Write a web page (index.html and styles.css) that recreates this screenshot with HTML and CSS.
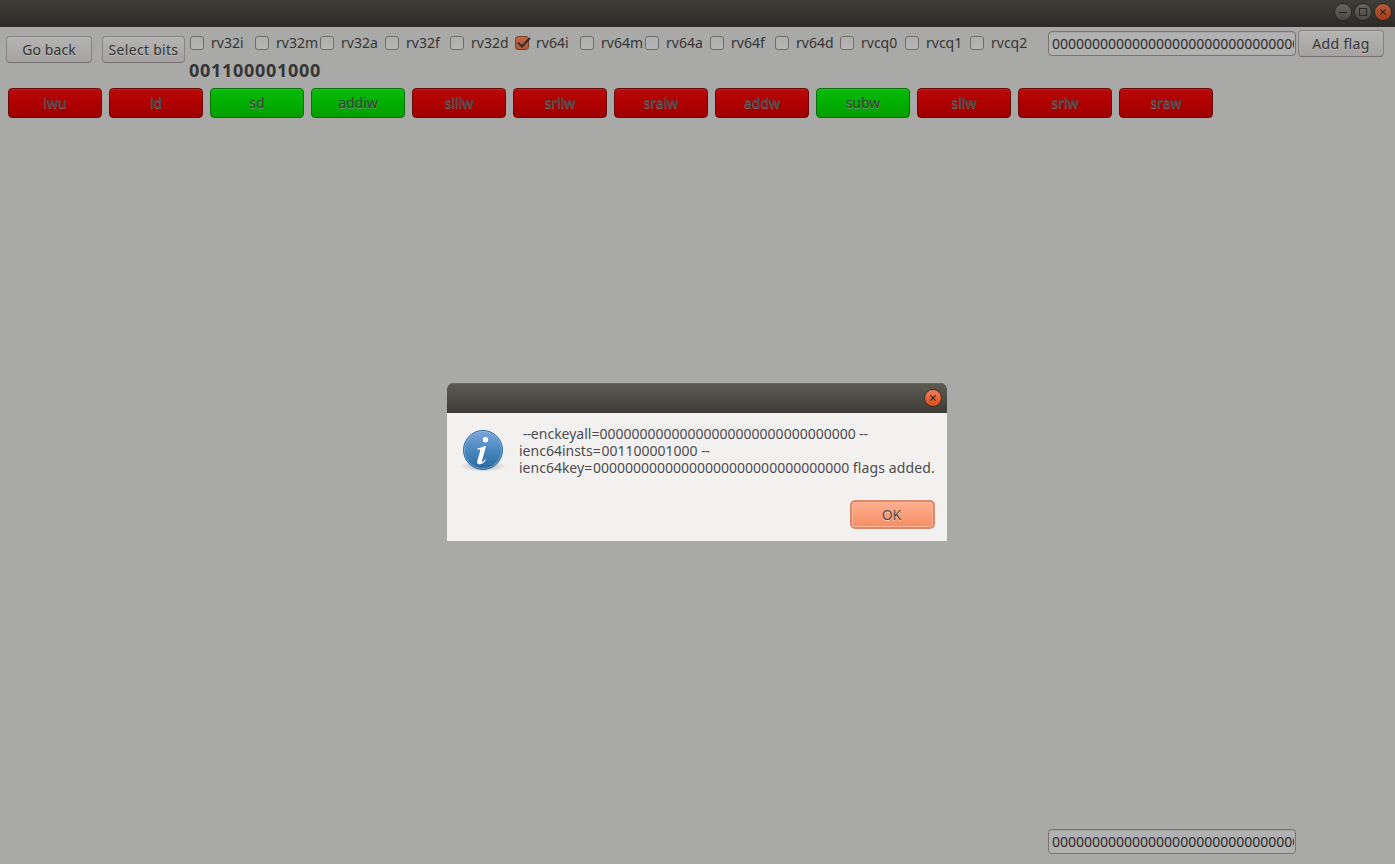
FILE: index.html
```
<!DOCTYPE html>
<html lang="en">
<head>
<meta charset="utf-8">
<title>Instruction flags</title>
<link rel="stylesheet" href="styles.css">
</head>
<body>
<div class="window">
  <header class="titlebar">
    <span class="wbtn"><svg viewBox="0 0 18 18"><path d="M5 9.500h8"/></svg></span>
    <span class="wbtn"><svg viewBox="0 0 18 18"><path d="M5.500 5.500h7v7h-7z"/></svg></span>
    <span class="wbtn close"><svg viewBox="0 0 18 18"><path d="M6.300 6.300l5.400 5.400M11.700 6.300l-5.400 5.400"/></svg></span>
  </header>
  <main class="content">
    <section class="toolbar">
      <button class="btn back">Go back</button>
      <button class="btn select">Select bits</button>
      <div class="choices">
        <div class="checks">
          <label class="check"><i class="box"></i>rv32i</label>
          <label class="check"><i class="box"></i>rv32m</label>
          <label class="check"><i class="box"></i>rv32a</label>
          <label class="check"><i class="box"></i>rv32f</label>
          <label class="check"><i class="box"></i>rv32d</label>
          <label class="check"><i class="box checked"><svg viewBox="0 0 16 16"><path d="M3 7.500l4 4 8-8.500"/></svg></i>rv64i</label>
          <label class="check"><i class="box"></i>rv64m</label>
          <label class="check"><i class="box"></i>rv64a</label>
          <label class="check"><i class="box"></i>rv64f</label>
          <label class="check"><i class="box"></i>rv64d</label>
          <label class="check"><i class="box"></i>rvcq0</label>
          <label class="check"><i class="box"></i>rvcq1</label>
          <label class="check"><i class="box"></i>rvcq2</label>
        </div>
        <div class="bits">001100001000</div>
      </div>
      <div class="entry"><div class="entry-text">00000000000000000000000000000000</div></div>
      <button class="btn add">Add flag</button>
    </section>
    <section class="insts">
      <button class="inst">lwu</button>
      <button class="inst">ld</button>
      <button class="inst on">sd</button>
      <button class="inst on">addiw</button>
      <button class="inst">slliw</button>
      <button class="inst">srliw</button>
      <button class="inst">sraiw</button>
      <button class="inst">addw</button>
      <button class="inst on">subw</button>
      <button class="inst">sllw</button>
      <button class="inst">srlw</button>
      <button class="inst">sraw</button>
    </section>
    <footer class="bottom">
      <div class="entry"><div class="entry-text">00000000000000000000000000000000</div></div>
    </footer>
  </main>
  <div class="dialog">
    <div class="dialog-title">
      <span class="wbtn close"><svg viewBox="0 0 18 18"><path d="M6.300 6.300l5.400 5.400M11.700 6.300l-5.400 5.400"/></svg></span>
    </div>
    <div class="dialog-body">
      <svg class="info" viewBox="0 0 48 48">
        <defs>
          <linearGradient id="blue" x1="0" y1="0" x2="0" y2="1"><stop offset="0" stop-color="#7da5dc"/><stop offset=".55" stop-color="#4685bd"/><stop offset="1" stop-color="#246a9e"/></linearGradient>
          <radialGradient id="shade"><stop offset="0" stop-color="#000" stop-opacity=".3"/><stop offset="1" stop-color="#000" stop-opacity="0"/></radialGradient>
        </defs>
        <ellipse cx="24" cy="40" rx="23" ry="6" fill="url(#shade)"/>
        <circle cx="24" cy="24" r="19.500" fill="url(#blue)" stroke="#2f6da6"/>
        <circle cx="24" cy="24" r="18.500" fill="none" stroke="#9fc4e8" stroke-opacity=".5"/>
        <circle cx="26.500" cy="13.700" r="2.700" fill="#fff"/>
        <path d="M18.300 22.500c2.600-.4 5-1.300 7.900-2.500l.8.300-4 14.200c-.3 1.300.1 1.500.7 1.200.8-.4 1.500-1.300 2.400-2.500l.8.500c-1.900 3-4.100 4.600-6.200 4.600-2.200 0-3-1.400-2.300-3.900l2.700-9.200c.3-1.300 0-1.700-1-1.700h-1.800z" fill="#fff"/>
      </svg>
      <div class="message">&nbsp;<span class="dash">--</span>enckeyall=00000000000000000000000000000000 <span class="dash">--</span><br>ienc64insts<span class="eq">=</span>001100001000 <span class="dash">--</span><br>ienc64key<span class="eq">=</span>00000000000000000000000000000000 <span class="tail">flags added.</span></div>
    </div>
    <div class="dialog-actions"><button class="ok">OK</button></div>
  </div>
</div>
</body>
</html>
```
FILE: styles.css
```
* { box-sizing: border-box; }
body { margin: 0; font: 14px/17px "Noto Sans", sans-serif; color: #353535; }
button { font: inherit; color: inherit; padding: 0; margin: 0; }
.window { position: relative; display: flex; flex-direction: column; width: 100%; height: 864px; overflow: hidden; background: #a9a9a7; }
.titlebar { height: 27px; flex: none; display: flex; justify-content: flex-end; gap: 2px; padding: 3px 3px 0; background: linear-gradient(#3e3d38, #2c2b27); }
.wbtn { display: block; width: 18px; height: 18px; border: 1px solid #292824; border-radius: 50%; background: linear-gradient(#65645e, #4b4a45); }
.wbtn svg { display: block; width: 18px; height: 18px; margin: -1px; fill: none; stroke: #292824; stroke-width: 1.2; }
.titlebar .close { background: linear-gradient(#b65b3d, #a73c16); }
.content { flex: 1; display: flex; flex-direction: column; }
.toolbar { display: flex; align-items: flex-start; height: 61px; padding: 3px 0 0 6px; }
.btn { flex: none; height: 27px; border: 1px solid #858381; border-bottom-color: #74716f; border-radius: 4px; background: linear-gradient(#b4b4b3, #a5a3a1); box-shadow: inset 0 1px #bababa; text-shadow: 0 1px #b9b9b8; white-space: nowrap; }
.back { width: 86px; margin: 6px 10px 0 0; letter-spacing: .1px; }
.select { width: 83px; margin: 6px 4px 0 0; letter-spacing: .3px; }
.choices { width: 859px; }
.checks { display: flex; height: 28px; padding: 4px 0 0 1px; }
.check { width: 65px; flex: none; display: flex; align-items: flex-start; gap: 7px; white-space: nowrap; }
.box { width: 14px; height: 14px; flex: none; margin-top: 2px; border: 1px solid #706e6d; border-radius: 3px; background: linear-gradient(#afafaf, #b5b5b5); }
.checked { background: linear-gradient(#c26743, #af5836); border-color: #7d4027; }
.checked svg { display: block; width: 16px; height: 16px; margin: -2px -1px; fill: none; stroke: #3d2b25; stroke-width: 2; overflow: visible; }
.bits { font-size: 18px; font-weight: 700; line-height: 24px; letter-spacing: .7px; }
.entry { flex: none; width: 248px; height: 25px; padding: 3px 1px 0 3px; border: 1px solid #777473; border-radius: 4px; background: #b1b1b1; box-shadow: inset 0 1px #a5a5a5; color: #2b2b2b; }
.toolbar .entry { margin: 1px 2px 0 0; }
.entry-text { overflow: hidden; white-space: nowrap; }
.add { width: 86px; letter-spacing: .35px; }
.insts { display: flex; gap: 7px; padding-left: 8px; }
.inst { width: 94px; height: 30px; padding-bottom: 2px; border: 1px solid #690b0b; border-radius: 4px; background: linear-gradient(#b90b0b, #b00000 50%, #9c0000); box-shadow: inset 0 1px #c11c1c; color: #474444; text-shadow: 0 1px #806a6a, 0 0 1px #6d5050; }
.inst.on { border-color: #087008; background: linear-gradient(#0bb90b, #00b000 50%, #089c00); box-shadow: inset 0 1px #1ac51a; color: #353b35; text-shadow: 0 1px #6c9c6c; }
.bottom { margin: auto 0 10px 1048px; }
.dialog { position: absolute; left: 447px; top: 383px; width: 500px; height: 158px; border-radius: 6px 6px 0 0; overflow: hidden; background: #f2f1f0; color: #4c4c4c; }
.dialog-title { height: 30px; padding: 6px 5px 0; display: flex; justify-content: flex-end; background: linear-gradient(#5d5b51, #3d3c37); box-shadow: inset 0 1px #6b695d; }
.dialog .wbtn { border-color: #363530; background: linear-gradient(#f47d5a, #e14d19); }
.dialog-body { display: flex; padding: 12px 0 0 12px; height: 87px; }
.info { width: 48px; height: 48px; flex: none; margin-top: 1px; }
.message { margin-left: 12px; white-space: nowrap; }
.dash { letter-spacing: -.4px; }
.eq { letter-spacing: .8px; }
.tail { letter-spacing: .12px; }
.dialog-actions { display: flex; justify-content: flex-end; padding-right: 12px; }
.ok { width: 85px; height: 29px; padding-right: 2px; border: 2px solid #d98a6d; border-radius: 5px; background: linear-gradient(#ffae90, #f58e65); box-shadow: inset 0 0 0 1px #fcb497; text-shadow: 0 1px #ffc3ac; }
```
